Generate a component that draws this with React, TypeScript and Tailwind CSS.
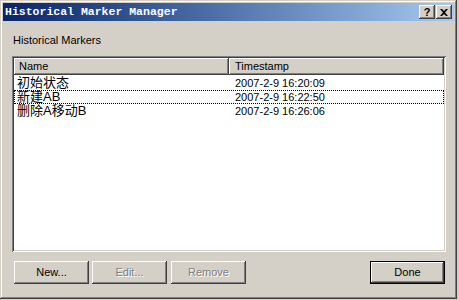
import React from "react";

const raised =
  "shadow-[inset_-1px_-1px_0_#404040,inset_1px_1px_0_#ffffff,inset_-2px_-2px_0_#808080,inset_2px_2px_0_#d4d0c8]";

function Btn({
  label,
  disabled,
  isDefault,
  className = "",
}: {
  label: string;
  disabled?: boolean;
  isDefault?: boolean;
  className?: string;
}) {
  if (isDefault) {
    return (
      <div className={`w-[75px] h-[23px] border border-black bg-[#d4d0c8] ${className}`}>
        <div
          className={`w-full h-full flex items-center justify-center text-[11px] text-black ${raised}`}
        >
          {label}
        </div>
      </div>
    );
  }
  return (
    <div
      className={`w-[75px] h-[23px] bg-[#d4d0c8] flex items-center justify-center text-[11px] ${raised} ${
        disabled ? "text-[#808080] [text-shadow:1px_1px_0_#ffffff]" : "text-black"
      } ${className}`}
    >
      {label}
    </div>
  );
}

const rows = [
  { name: "初始状态", ts: "2007-2-9 16:20:09" },
  { name: "新建AB", ts: "2007-2-9 16:22:50", focus: true },
  { name: "删除A移动B", ts: "2007-2-9 16:26:06" },
];

export default function App() {
  return (
    <div
      className="w-[459px] h-[300px] bg-[#d4d0c8] overflow-hidden"
      style={{ fontFamily: '"Liberation Sans", Arial, sans-serif' }}
    >
      <div className="w-[457px] h-[299px] bg-[#d4d0c8] p-[3px] flex flex-col shadow-[inset_-1px_-1px_0_#404040,inset_1px_1px_0_#d4d0c8,inset_-2px_-2px_0_#808080,inset_2px_2px_0_#ffffff]">
        {/* Title bar */}
        <div className="h-[18px] flex items-center bg-gradient-to-r from-[#0a246a] to-[#a6caf0] pl-[2px] pr-[2px]">
          <span
            className="flex-1 text-white font-bold text-[11.5px] leading-none"
            style={{ fontFamily: '"Liberation Mono", "Courier New", monospace' }}
          >
            Historical Marker Manager
          </span>
          <div className={`w-[16px] h-[14px] bg-[#d4d0c8] flex items-center justify-center ${raised}`}>
            <span className="text-[11px] font-bold leading-none text-black">?</span>
          </div>
          <div className={`w-[16px] h-[14px] ml-[1px] bg-[#d4d0c8] flex items-center justify-center ${raised}`}>
            <svg width="8" height="7" viewBox="0 0 8 7">
              <path d="M0 0h2l2 2l2-2h2l-3 3.5l3 3.5h-2l-2-2l-2 2h-2l3-3.5z" fill="#000" />
            </svg>
          </div>
        </div>

        {/* Body */}
        <div className="flex flex-col pl-[9px]">
          <div className="mt-[11px] h-[16px] leading-[16px] text-[11px] text-black pl-[1px]">
            Historical Markers
          </div>

          {/* List */}
          <div className="mt-[8px] w-[434px] h-[196px] bg-white shadow-[inset_1px_1px_0_#808080,inset_-1px_-1px_0_#ffffff,inset_2px_2px_0_#404040,inset_-2px_-2px_0_#d4d0c8] p-[2px]">
            <div className="flex h-[17px] text-[11px] text-black">
              <div className={`w-[215px] h-full bg-[#d4d0c8] flex items-center pl-[5px] ${raised}`}>
                Name
              </div>
              <div className={`w-[215px] h-full bg-[#d4d0c8] flex items-center pl-[6px] ${raised}`}>
                Timestamp
              </div>
            </div>
            <div className="mt-[1px] flex flex-col">
              {rows.map((r) => (
                <div
                  key={r.name}
                  className={`flex h-[14px] items-center text-black ${
                    r.focus ? "outline outline-1 outline-dotted outline-[#000] -outline-offset-1" : ""
                  }`}
                >
                  <div
                    className="w-[215px] h-[14px] pl-[3px] text-[13px] leading-[14px] overflow-visible"
                    style={{
                      fontFamily:
                        '"Liberation Sans", "Noto Sans CJK SC", sans-serif',
                    }}
                  >
                    {r.name}
                  </div>
                  <div className="w-[215px] h-[14px] pl-[6px] text-[11px] leading-[14px]">{r.ts}</div>
                </div>
              ))}
            </div>
          </div>

          {/* Buttons */}
          <div className="mt-[9px] flex w-[434px]">
            <Btn label="New..." className="ml-[2px]" />
            <Btn label="Edit..." disabled className="ml-[3px]" />
            <Btn label="Remove" disabled className="ml-[4px]" />
            <div className="flex-1" />
            <Btn label="Done" isDefault className="mr-[1px]" />
          </div>
        </div>
      </div>
    </div>
  );
}
